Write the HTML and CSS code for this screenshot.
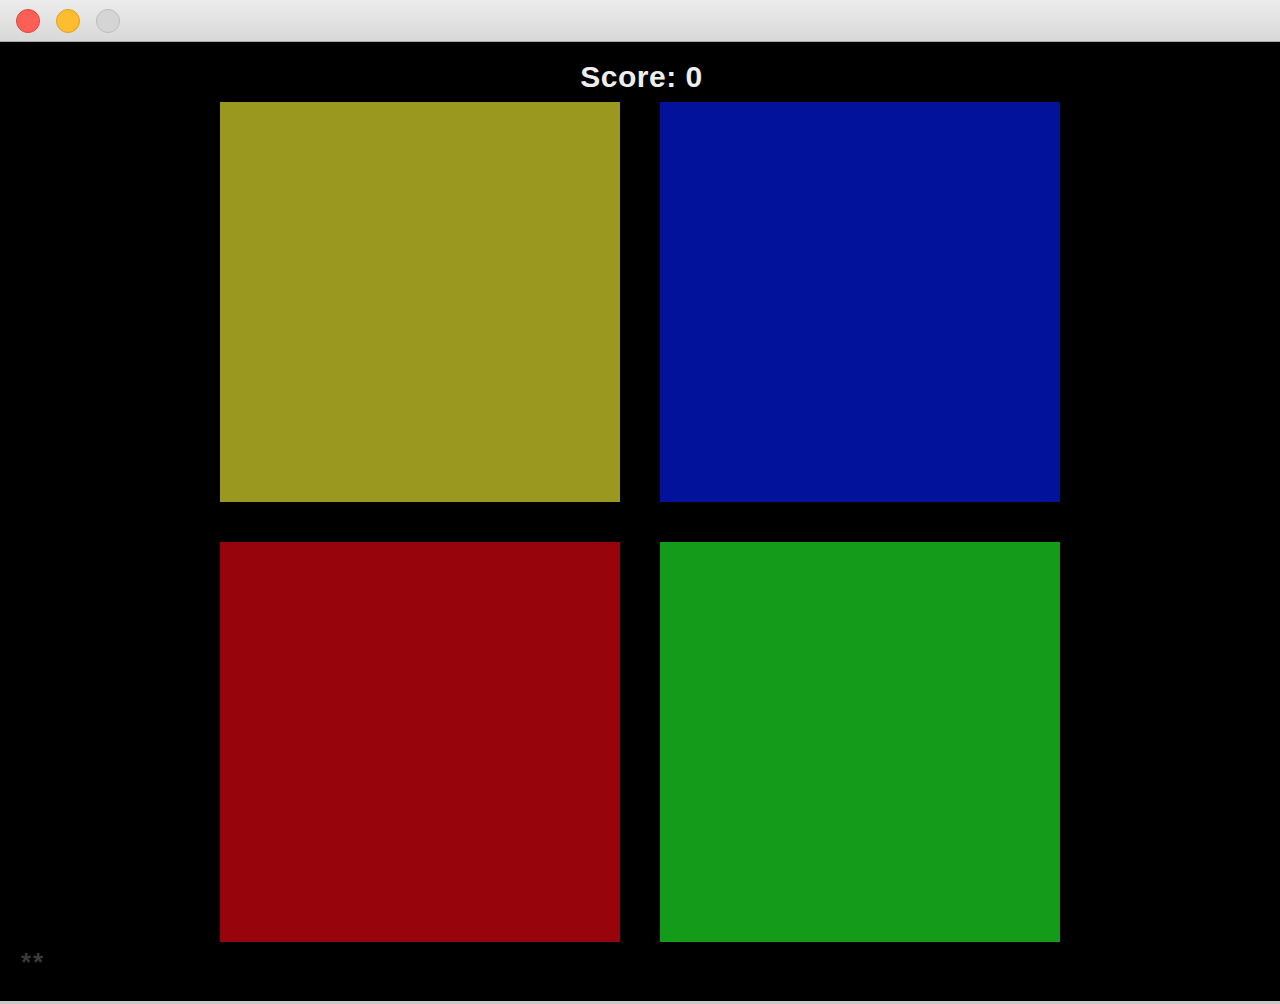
FILE: index.html
```html
<!DOCTYPE html>
<html>
<head>
<meta charset="utf-8">
<link rel="stylesheet" href="styles.css">
</head>
<body>
<div class="window">
  <div class="titlebar">
    <span class="light close"></span>
    <span class="light min"></span>
    <span class="light max"></span>
  </div>
  <div class="content">
    <div class="score">Score: 0</div>
    <div class="board">
      <div class="pad yellow"></div>
      <div class="pad blue"></div>
      <div class="pad red"></div>
      <div class="pad green"></div>
    </div>
    <div class="stars">**</div>
  </div>
  <div class="bottom"></div>
</div>
</body>
</html>
```

FILE: styles.css
```css
html, body {
  margin: 0;
  padding: 0;
  background: #000;
}
.window {
  width: 1280px;
  height: 1004px;
  display: flex;
  flex-direction: column;
  overflow: hidden;
}
.titlebar {
  height: 41px;
  flex: none;
  background: linear-gradient(#ececec, #d8d8d8);
  border-bottom: 1px solid #a9a9a9;
  display: flex;
  align-items: center;
  gap: 16px;
  padding-left: 16px;
  box-sizing: content-box;
}
.light {
  width: 24px;
  height: 24px;
  border-radius: 50%;
  box-sizing: border-box;
}
.close { background: #fd5f57; border: 1px solid #e0443e; }
.min { background: #febc2f; border: 1px solid #dea123; }
.max { background: #d5d5d5; border: 1px solid #bdbdbd; }
.content {
  flex: 1;
  display: flex;
  flex-direction: column;
  align-items: center;
}
.score {
  height: 60px;
  box-sizing: border-box;
  padding-top: 18px;
  padding-left: 3px;
  font-family: "Liberation Sans", Arial, sans-serif;
  font-weight: bold;
  font-size: 30px;
  line-height: 34px;
  color: #eeeeee;
  letter-spacing: 0.5px;
}
.board {
  display: grid;
  grid-template-columns: 400px 400px;
  grid-template-rows: 400px 400px;
  gap: 40px;
}
.yellow { background: #9b9820; }
.blue { background: #03129a; }
.red { background: #97040c; }
.green { background: #149b1a; }
.stars {
  align-self: flex-start;
  margin-left: 21px;
  margin-top: 7px;
  font-family: "Liberation Sans", Arial, sans-serif;
  font-weight: bold;
  font-size: 26px;
  line-height: 26px;
  letter-spacing: 2px;
  color: #3a3a3a;
}
.bottom {
  height: 3px;
  flex: none;
  background: #c8c8c8;
}
```
